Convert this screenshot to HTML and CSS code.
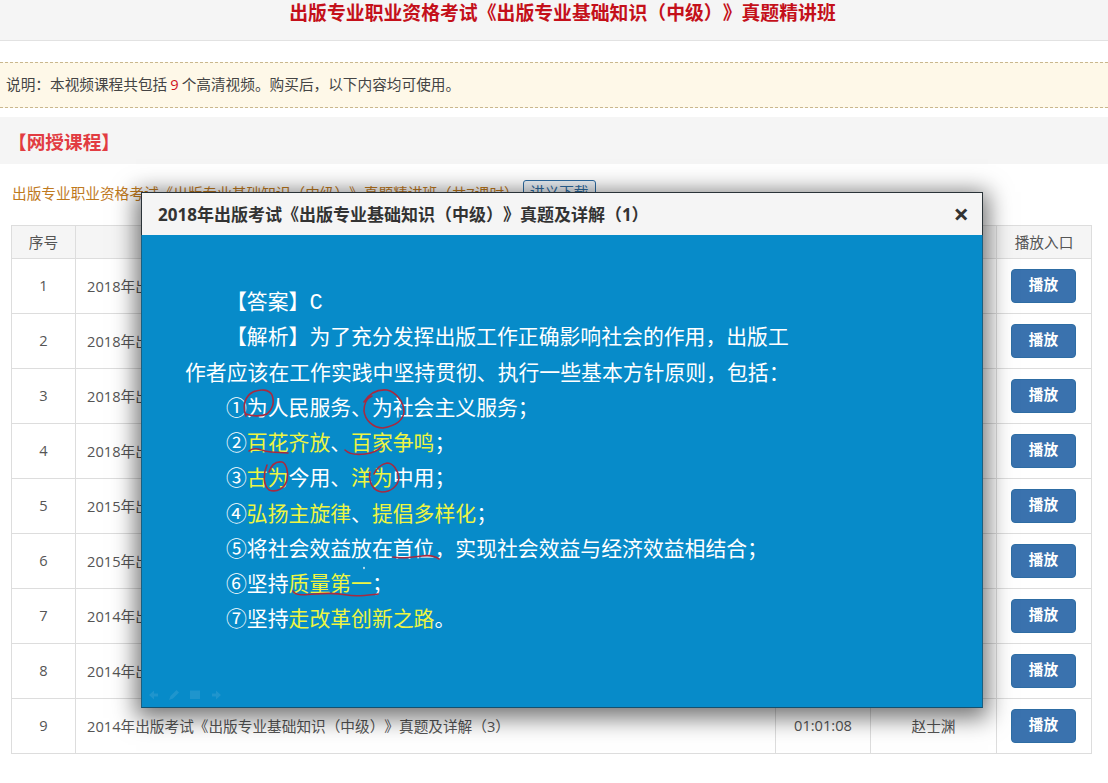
FILE: index.html
```html
<!DOCTYPE html>
<html lang="zh-CN">
<head>
<meta charset="utf-8">
<title>出版专业职业资格考试</title>
<link rel="stylesheet" href="styles.css">
</head>
<body>
<header class="top"><h1>出版专业职业资格考试《出版专业基础知识（中级）》真题精讲班</h1></header>
<div class="notice">说明：本视频课程共包括<em>9</em>个高清视频。购买后，以下内容均可使用。</div>
<h2 class="section">【网授课程】</h2>
<div class="course"><span>出版专业职业资格考试《出版专业基础知识（中级）》真题精讲班（共7课时）</span><a class="handout">讲义下载</a></div>
<table class="list">
<thead><tr><th class="c1">序号</th><th class="c2"></th><th class="c3"></th><th class="c4"></th><th class="c5">播放入口</th></tr></thead>
<tbody>
<tr><td class="mid">1</td><td>2018年出版考试《出版专业基础知识（中级）》真题及详解（1）</td><td class="mid">01:00:00</td><td class="mid">赵士渊</td><td class="action"><a class="play">播放</a></td></tr>
<tr><td class="mid">2</td><td>2018年出版考试《出版专业基础知识（中级）》真题及详解（2）</td><td class="mid">01:00:00</td><td class="mid">赵士渊</td><td class="action"><a class="play">播放</a></td></tr>
<tr><td class="mid">3</td><td>2018年出版考试《出版专业基础知识（中级）》真题及详解（3）</td><td class="mid">01:00:00</td><td class="mid">赵士渊</td><td class="action"><a class="play">播放</a></td></tr>
<tr><td class="mid">4</td><td>2018年出版考试《出版专业基础知识（中级）》真题及详解（4）</td><td class="mid">01:00:00</td><td class="mid">赵士渊</td><td class="action"><a class="play">播放</a></td></tr>
<tr><td class="mid">5</td><td>2015年出版考试《出版专业基础知识（中级）》真题及详解（1）</td><td class="mid">01:00:00</td><td class="mid">赵士渊</td><td class="action"><a class="play">播放</a></td></tr>
<tr><td class="mid">6</td><td>2015年出版考试《出版专业基础知识（中级）》真题及详解（2）</td><td class="mid">01:00:00</td><td class="mid">赵士渊</td><td class="action"><a class="play">播放</a></td></tr>
<tr><td class="mid">7</td><td>2014年出版考试《出版专业基础知识（中级）》真题及详解（1）</td><td class="mid">01:00:00</td><td class="mid">赵士渊</td><td class="action"><a class="play">播放</a></td></tr>
<tr><td class="mid">8</td><td>2014年出版考试《出版专业基础知识（中级）》真题及详解（2）</td><td class="mid">01:00:00</td><td class="mid">赵士渊</td><td class="action"><a class="play">播放</a></td></tr>
<tr><td class="mid">9</td><td>2014年出版考试《出版专业基础知识（中级）》真题及详解（3）</td><td class="mid">01:01:08</td><td class="mid">赵士渊</td><td class="action"><a class="play">播放</a></td></tr>
</tbody>
</table>
<section class="modal">
<div class="modal-head"><h3>2018年出版考试《出版专业基础知识（中级）》真题及详解（1）</h3><span class="close">×</span></div>
<div class="slide">
<p class="ind">【答案】<span class="latin">C</span></p>
<p class="ind">【解析】为了充分发挥出版工作正确影响社会的作用，出版工</p>
<p>作者应该在工作实践中坚持贯彻、执行一些基本方针原则，包括：</p>
<p class="ind">①为人民服务、为社会主义服务；</p>
<p class="ind">②<b>百花齐放</b>、<b>百家争鸣</b>；</p>
<p class="ind">③<b>古为</b>今用、<b>洋为</b>中用；</p>
<p class="ind">④<b>弘扬主旋律</b>、<b>提倡多样化</b>；</p>
<p class="ind">⑤将社会效益放在首位，实现社会效益与经济效益相结合；</p>
<p class="ind">⑥坚持<b>质量第一</b>；</p>
<p class="ind">⑦坚持<b>走改革创新之路</b>。</p>
<svg class="ink" width="842" height="473" viewBox="141 235 842 473" fill="none" stroke="#a82a40" stroke-width="1.6" stroke-linecap="round" stroke-linejoin="round">
<path d="M245 416C241 406 244 396 252 392C259 389 268 389 271 395C274 403 271 410 266 414C260 417 250 416 245 414"/>
<path d="M363 402C368 394 376 389 386 390C395 392 403 402 403 412C402 421 393 426 382 428C372 428 364 420 363 411C363 404 366 398 371 396"/>
<path d="M248 451C252 447 258 449 264 451C272 453 280 452 287 453"/>
<path d="M344 450C348 454 356 455 364 454C372 453 377 451 380 447"/>
<path d="M266 465C262 474 262 485 268 490C276 493 284 488 286 480C288 472 285 463 281 462C274 461 270 466 268 472"/>
<path d="M369 472C367 482 372 491 381 492C390 492 397 486 398 478C397 470 392 463 386 463C380 464 375 469 373 474"/>
<path d="M392 557C400 559 412 557 421 556C428 555 434 556 438 559"/>
<path d="M292 591C294 596 304 595 314 594C326 593 336 593 346 595C356 597 368 595 377 594"/>
<path d="M363 567.5v1" stroke="#d4e8f2"/>
</svg>
<svg class="tools" width="76" height="12" viewBox="0 0 76 12" fill="#2a9ad0">
<path d="M1 6l5-4.500v3h4v3H6v3z"/>
<path d="M21 11l1.500-4 6-6 2.500 2.500-6 6z"/>
<rect x="42" y="1.500" width="10" height="8.500"/>
<path d="M73 6l-5-4.500v3h-4v3h4v3z"/>
</svg>
</div>
</section>
</body>
</html>
```
FILE: styles.css
```css
* { box-sizing: border-box; }
html, body { margin: 0; padding: 0; }
body {
  font-family: "Open Sans", "Noto Sans CJK SC", sans-serif;
  font-size: 14.67px;
  color: #555;
  background: #fff;
  height: 783px;
  overflow: hidden;
  position: relative;
  text-spacing-trim: space-all;
}
.top {
  height: 41px;
  background: #f5f5f5;
  border-bottom: 1px solid #e2e2e2;
  text-align: center;
  padding-left: 17px;
}
.top h1 {
  margin: 0;
  font-size: 18.85px;
  line-height: 26px;
  font-weight: 700;
  color: #c4101a;
}
.notice {
  margin-top: 21px;
  height: 46px;
  line-height: 43px;
  padding-left: 6px;
  background: #fef8e8;
  border-top: 1px dashed #c9b78d;
  border-bottom: 1px dashed #c9b78d;
  color: #444;
}
.notice em { font-style: normal; color: #d0141c; margin: 0 3px; }
.section {
  margin: 9px 0 0;
  height: 47px;
  line-height: 49px;
  padding-left: 8px;
  background: #f5f5f5;
  font-size: 18.67px;
  font-weight: 700;
  color: #e23c42;
}
.course {
  display: flex;
  align-items: center;
  height: 26px;
  margin: 15px 0 0 12px;
  color: #bf7a1e;
}
.handout {
  margin-left: 4px;
  width: 73px;
  height: 24px;
  line-height: 22px;
  text-align: center;
  border: 1px solid #2e6da4;
  border-radius: 3px;
  background: #eef3f8;
  color: #2e6da4;
  flex: none;
}
.list {
  border-collapse: collapse;
  table-layout: fixed;
  width: 1081px;
  margin: 20px 0 0 11px;
}
.list th, .list td { border: 1px solid #ddd; font-weight: 400; }
.list th { height: 33px; background: #f5f5f5; text-align: center; padding: 0 0 2px; }
.list td { height: 55px; padding: 0 11px 2px; }
.c1 { width: 64px; }
.c3 { width: 95px; }
.c4 { width: 126px; }
.c5 { width: 95px; }
.mid, .action { text-align: center; }
.list td.mid { padding: 0 0 2px; }
.list td.action { padding: 0; }
.play {
  display: inline-block;
  width: 65px;
  height: 34px;
  margin-right: 1px;
  line-height: 28px;
  border: 1px solid #2e6da4;
  border-radius: 4px;
  background: #3a72ae;
  color: #fff;
  font-weight: 700;
  vertical-align: middle;
}
.modal {
  position: absolute;
  left: 141px;
  top: 192px;
  width: 842px;
  height: 516px;
  border: 1px solid #2a3338;
  box-shadow: 0 5px 22px 5px rgba(0,0,0,.55);
  background: #f5f5f5;
  display: flex;
  flex-direction: column;
}
.modal-head {
  height: 42px;
  flex: none;
  display: flex;
  align-items: center;
  justify-content: space-between;
  padding: 0 13px 2px 16px;
}
.modal-head h3 { margin: 0; font-size: 17px; font-weight: 700; color: #333; }
.close { font-size: 27px; font-weight: 700; color: #333; line-height: 1; }
.slide {
  position: relative;
  flex: 1;
  background: #078bc9;
  padding: 48px 0 0 43px;
  font-family: "Noto Sans CJK SC", sans-serif;
  font-size: 20.85px;
  line-height: 35.25px;
  color: #fff;
  margin: 0 -1px -1px -1px;
  border-left: 1px solid #1b5f80;
  border-right: 1px solid #1b5f80;
  border-bottom: 1px solid #14506e;
}
.slide p { margin: 0; white-space: nowrap; }
.slide .ind { text-indent: 41px; }
.slide b { font-weight: 400; color: #eef542; }
.latin { font-family: "Liberation Mono", monospace; font-size: 22px; line-height: 0; }
.ink { position: absolute; left: 0; top: 0; }
.tools { position: absolute; left: 6px; top: 454px; opacity: .7; }
```
